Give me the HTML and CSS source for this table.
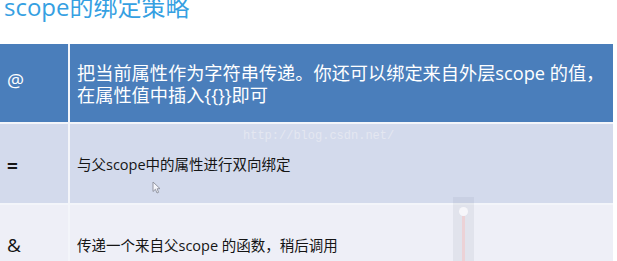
FILE: index.html
```html
<!DOCTYPE html>
<html lang="zh-CN">
<head>
<meta charset="utf-8">
<title>scope的绑定策略</title>
<link rel="stylesheet" href="styles.css">
</head>
<body>
<div class="slide">
  <h1 class="title">scope的绑定策略</h1>
  <div class="table">
    <div class="cell head sym">@</div>
    <div class="cell head desc">把当前属性作为字符串传递。你还可以绑定来自外层scope 的值，<br>在属性值中插入{{}}即可</div>
    <div class="cell odd sym eq">=</div>
    <div class="cell odd desc small">与父scope中的属性进行双向绑定</div>
    <div class="cell even sym">&amp;</div>
    <div class="cell even desc small">传递一个来自父scope 的函数，稍后调用</div>
  </div>
  <div class="watermark">http://blog.csdn.net/</div>
  <svg class="cursor" width="9" height="13" viewBox="0 0 9 13"><path d="M1 1 L1 10.5 L3.4 8.3 L5 12 L6.6 11.3 L5.1 7.8 L8 7.6 Z" fill="#f4f5fa" stroke="#8a8d99" stroke-width="0.9" stroke-linejoin="round"/></svg>
  <div class="scrub"><span class="knob"></span><span class="track"></span></div>
</div>
</body>
</html>
```

FILE: styles.css
```css
html, body {
  margin: 0;
  padding: 0;
  background: #ffffff;
}
body {
  width: 617px;
  height: 261px;
  overflow: hidden;
  font-family: "Open Sans", "Noto Sans CJK SC", sans-serif;
}
.slide {
  position: relative;
  width: 617px;
  height: 261px;
  overflow: hidden;
}
.title {
  margin: -5px 0 0 0;
  padding-left: 4px;
  height: 49px;
  font-size: 24px;
  line-height: 24px;
  font-weight: normal;
  color: #35a0e2;
}
.table {
  display: grid;
  grid-template-columns: 68px 543px;
  grid-template-rows: 78px 79px 79px;
  gap: 2px;
  width: 613px;
  background: #f3f5fa;
}
.cell {
  display: flex;
  align-items: center;
  padding-left: 7px;
}
.head {
  background: #4a7ebb;
  color: #ffffff;
  font-size: 18.2px;
  line-height: 22px;
}
.head.sym {
  padding-bottom: 6px;
}
.odd {
  background: #d3daec;
  color: #151515;
}
.even {
  background: #eeeff7;
  color: #151515;
}
.sym {
  font-size: 19px;
}
.odd.sym {
  padding-top: 5px;
}
.eq {
  font-weight: bold;
}
.small {
  font-size: 14.5px;
  line-height: 20px;
}
.desc {
  padding-top: 2px;
}
.watermark {
  position: absolute;
  left: 243px;
  top: 129px;
  font-family: "Liberation Mono", monospace;
  font-size: 12px;
  color: #e4e7f1;
}
.cursor {
  position: absolute;
  left: 152px;
  top: 181px;
}
.scrub {
  position: absolute;
  left: 453px;
  top: 197px;
  width: 21px;
  height: 70px;
  background: rgba(120, 125, 150, 0.1);
}
.knob {
  position: absolute;
  left: 6px;
  top: 10px;
  width: 9px;
  height: 9px;
  border-radius: 50%;
  background: #f6f6fa;
}
.track {
  position: absolute;
  left: 9px;
  top: 19px;
  width: 3px;
  height: 60px;
  background: #ecd2d6;
}
```
